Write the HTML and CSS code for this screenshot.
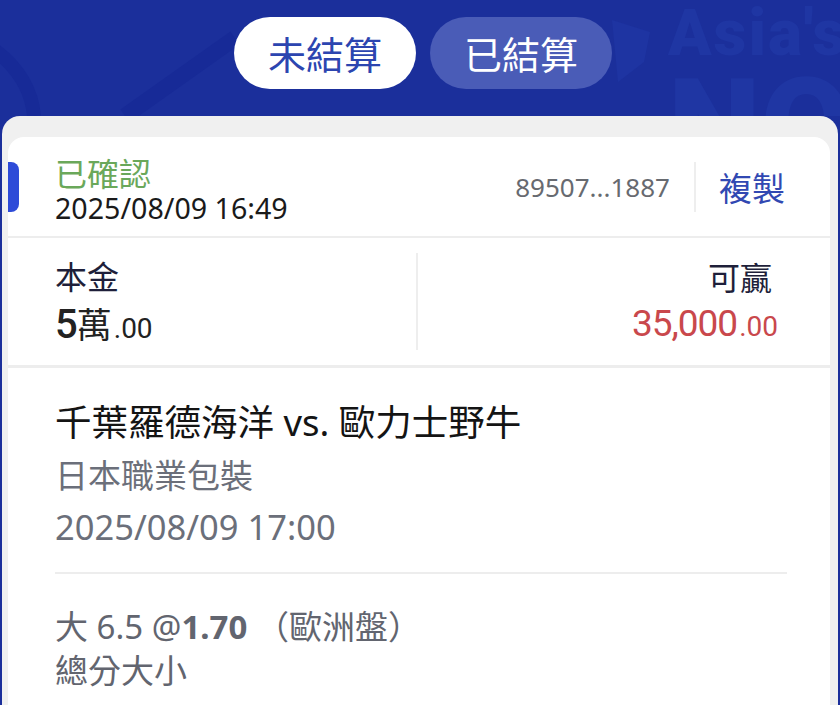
FILE: index.html
```html
<!DOCTYPE html>
<html lang="zh-Hant">
<head>
    <meta charset="UTF-8">
    <meta name="viewport" content="width=device-width, initial-scale=1.0">
    <title>注單</title>
    <link rel="stylesheet" href="styles.css">
</head>
<body>
    <div class="top">
        <svg class="deco" width="840" height="116" viewBox="0 0 840 116">
            <path d="M-20 40 Q30 70 34 116" fill="none" stroke="#172a97" stroke-width="14"/>
            <path d="M125 116 L235 38" fill="none" stroke="#172a97" stroke-width="16"/>
            <path d="M612 20 L650 32 L644 62 L618 82 Z" fill="#1e34a2"/>
            <text x="668" y="55" class="deco-text">Asia's</text>
            <text x="668" y="172" class="deco-big">NO</text>
        </svg>
        <div class="tabs">
            <button class="tab active" type="button">未結算</button>
            <button class="tab" type="button">已結算</button>
        </div>
    </div>

    <div class="panel">
        <div class="card">
            <div class="head">
                <span class="mark"></span>
                <div class="status">
                    <div class="state">已確認</div>
                    <div class="stamp">2025/08/09 16:49</div>
                </div>
                <div class="ref">89507...1887</div>
                <span class="vline"></span>
                <button class="copy" type="button">複製</button>
            </div>

            <div class="amounts">
                <div class="amt">
                    <div class="label">本金</div>
                    <div class="value"><span class="num">5</span><span class="unit">萬</span><span class="dec">.00</span></div>
                </div>
                <span class="split"></span>
                <div class="amt right">
                    <div class="label">可贏</div>
                    <div class="value win"><span class="num">35,000</span><span class="dec">.00</span></div>
                </div>
            </div>

            <div class="match">
                <div class="teams">千葉羅德海洋 vs. 歐力士野牛</div>
                <div class="sub">日本職業包裝</div>
                <div class="sub kickoff">2025/08/09 17:00</div>
            </div>

            <div class="bet">
                <div class="pick">大 6.5 @<b>1.70</b> （歐洲盤）</div>
                <div class="pick">總分大小</div>
            </div>
        </div>
    </div>
</body>
</html>
```

FILE: styles.css
```css
* {
    box-sizing: border-box;
}
html, body {
    margin: 0;
    height: 100%;
    overflow: hidden;
}
body {
    background-color: #1b2f9b;
    font-family: "Noto Sans", "Noto Sans CJK TC", sans-serif;
}

/* top blue header with tabs */
.top {
    position: relative;
    height: 116px;
    padding-top: 17px;
    overflow: hidden;
}
.deco {
    position: absolute;
    left: 0;
    top: 0;
}
.deco-text {
    font-family: Roboto, sans-serif;
    font-weight: 900;
    font-size: 64px;
    letter-spacing: 2px;
    fill: #1f36a3;
}
.deco-big {
    font-family: Roboto, sans-serif;
    font-weight: 900;
    font-size: 132px;
    fill: #1f36a3;
}
.tabs {
    position: relative;
    display: flex;
    justify-content: center;
    gap: 14px;
    padding-left: 6px;
}
.tab {
    height: 72px;
    padding: 0 34px;
    border: none;
    border-radius: 36px;
    background-color: #4a5cb7;
    color: #fff;
    font-family: "Noto Sans CJK TC", sans-serif;
    font-size: 38px;
    line-height: 72px;
}
.tab.active {
    background-color: #fff;
    color: #2c45b0;
}

/* grey panel + white card */
.panel {
    height: 100%;
    margin: 0 2px;
    padding: 21px 8px 0 6px;
    background-color: #f0f0f0;
    border-radius: 18px 18px 0 0;
}
.card {
    background-color: #fff;
    border-radius: 16px 16px 0 0;
    min-height: 700px;
}

.head {
    display: flex;
    align-items: center;
    height: 101px;
    padding-right: 45px;
    border-bottom: 2px solid #ededed;
}
.mark {
    width: 11px;
    height: 50px;
    background-color: #2e4bd8;
    border-radius: 0 8px 8px 0;
}
.status {
    flex: 1;
    margin-left: 36px;
    padding-top: 4px;
}
.state {
    color: #6aa85a;
    font-family: "Noto Sans CJK TC", sans-serif;
    font-size: 32px;
    line-height: 38px;
}
.stamp {
    color: #1a1a1a;
    font-size: 28.6px;
    line-height: 34px;
}
.ref {
    color: #676a70;
    font-size: 26px;
}
.vline {
    width: 2px;
    height: 50px;
    margin: 0 23px 0 24px;
    background-color: #eeeeee;
}
.copy {
    padding: 0;
    border: none;
    background: none;
    color: #3148b2;
    font-family: "Noto Sans CJK TC", sans-serif;
    font-size: 33px;
}

/* amounts */
.amounts {
    display: flex;
    align-items: center;
    height: 130px;
    padding-top: 6px;
    border-bottom: 3px solid #ededed;
}
.amt {
    flex: 1;
    padding-left: 47px;
}
.amt.right {
    text-align: right;
    padding: 0 52px 0 0;
}
.amt.right .label {
    margin-right: 6px;
}
.split {
    width: 2px;
    height: 97px;
    margin-top: -6px;
    background-color: #eeeeee;
}
.label {
    color: #1e1f3a;
    font-family: "Noto Sans CJK TC", sans-serif;
    font-size: 32px;
    line-height: 40px;
}
.value {
    margin-top: 6px;
    color: #222;
    font-family: Roboto, "Noto Sans CJK TC", sans-serif;
    line-height: 44px;
}
.value .num {
    font-size: 40px;
    font-weight: 500;
    letter-spacing: -1px;
}
.value .unit {
    font-family: "Noto Sans CJK TC", sans-serif;
    font-size: 35px;
}
.value .dec {
    font-size: 28px;
    margin-left: 2px;
}
.value.win {
    color: #c9484c;
}
.value.win .num {
    font-weight: 400;
    font-size: 37px;
}

/* match info */
.match {
    margin: 0 43px 0 47px;
    padding: 32px 0 20px;
    border-bottom: 2px solid #ededed;
}
.teams {
    color: #141414;
    font-size: 36.5px;
    line-height: 44px;
    margin-bottom: 6px;
}
.sub {
    color: #6b6f7a;
    font-size: 33px;
    line-height: 51px;
}
.sub.kickoff {
    font-size: 34.5px;
}

.bet {
    padding: 31px 47px 0;
}
.pick {
    color: #62656f;
    font-size: 33px;
    line-height: 44px;
}
.pick b {
    font-weight: 700;
}
```
